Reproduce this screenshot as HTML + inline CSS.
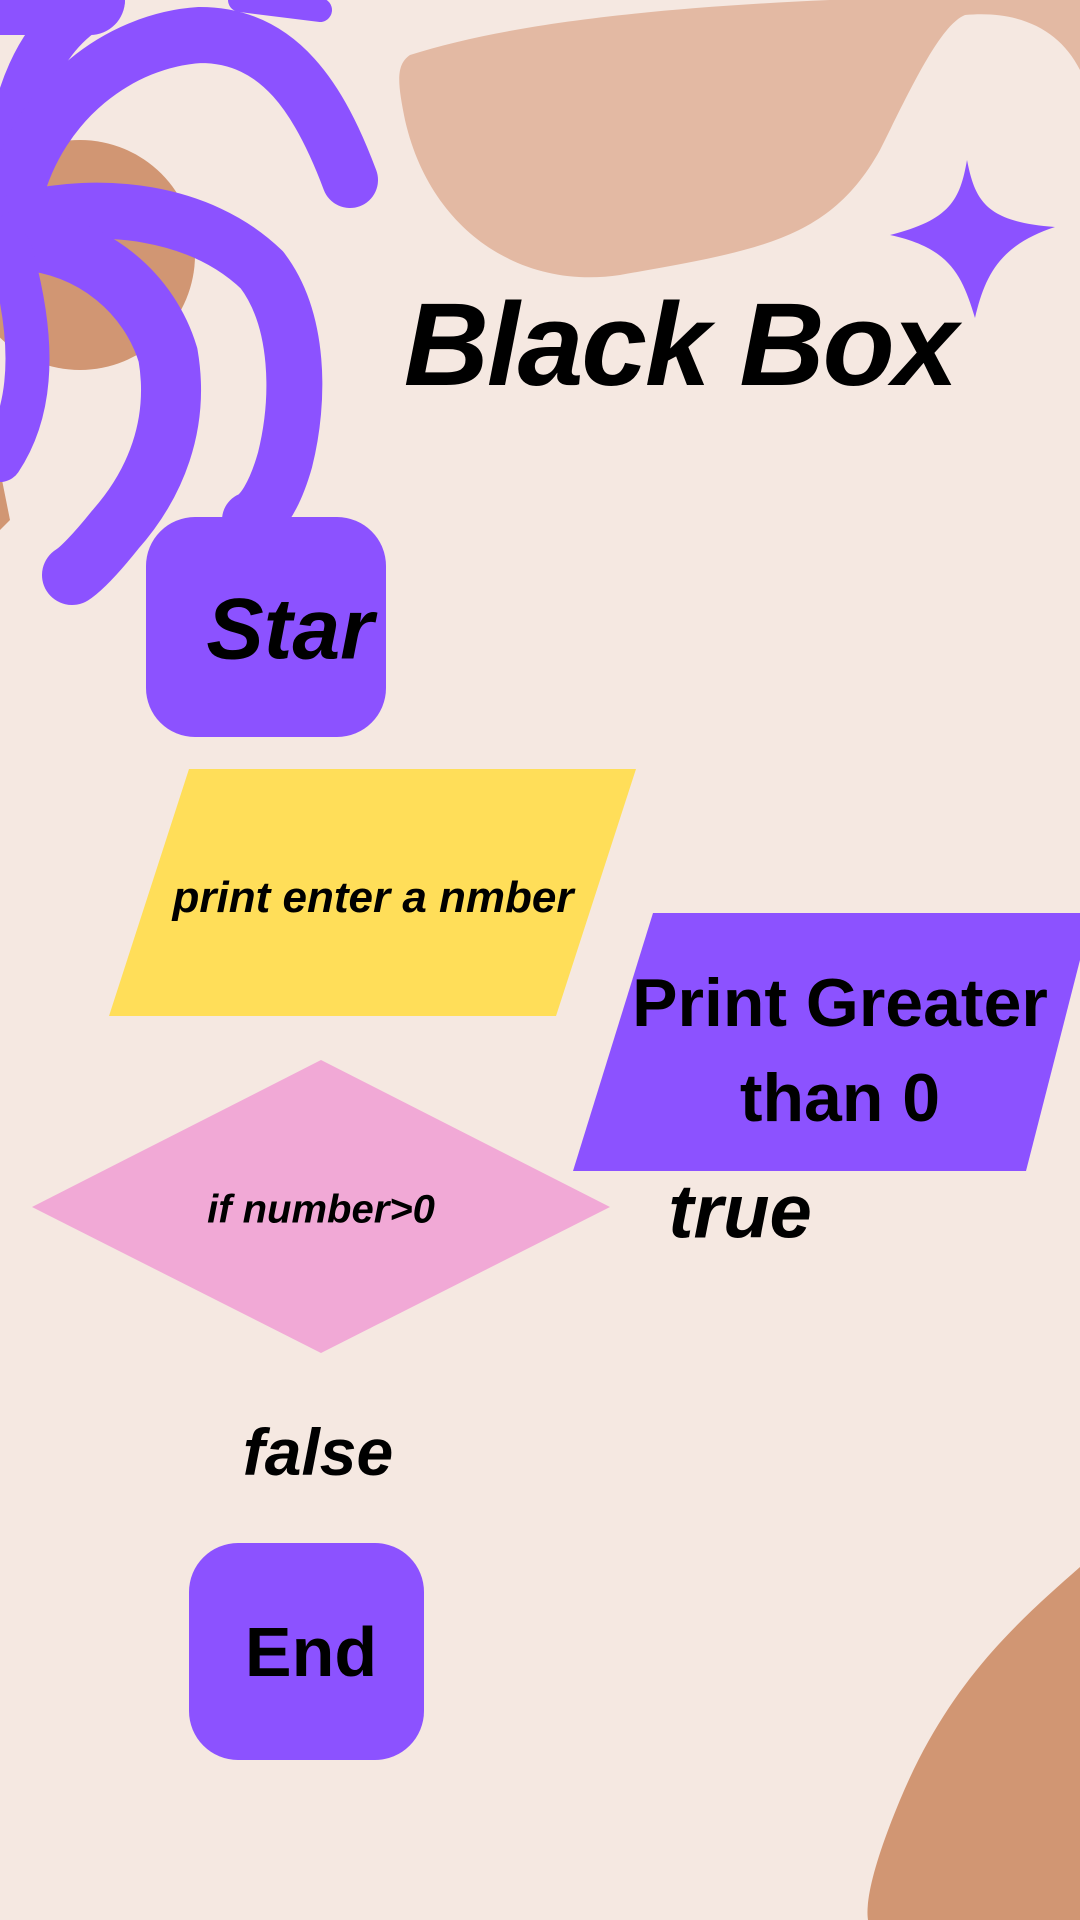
<!DOCTYPE html>
<html><head><meta charset="utf-8"><style>
html,body{margin:0;padding:0}
body{width:1080px;height:1920px;position:relative;overflow:hidden;background:#f5e8e1;font-family:"Liberation Sans",sans-serif}
.t{position:absolute;white-space:nowrap;color:#000;transform:translate(-50%,-50%)}
.sc{font-family:"Liberation Sans",sans-serif;font-style:italic;font-weight:bold}
.bd{font-family:"Liberation Sans",sans-serif;font-weight:bold}
</style></head><body>
<svg width="1080" height="1920" style="position:absolute;left:0;top:0">
<path d="M410 55 C520 20 700 0 1000 -5 L1080 0 L1080 70 C1060 30 1020 10 965 15 C940 25 910 90 880 150 C830 240 760 250 620 275 C520 290 430 230 405 120 C398 85 395 65 410 55Z" fill="#e3b9a3"/>
<circle cx="80" cy="255" r="115" fill="#d19673"/>
<path d="M0 470 L10 520 L0 530Z" fill="#d19673"/>
<g fill="none" stroke="#8c52ff" stroke-linecap="round">
<path d="M8 200 C10 100 40 30 100 0" stroke-width="50"/>
<path d="M0 0 L90 0" stroke-width="70"/>
<path d="M240 0 L320 10" stroke-width="24"/>
<path d="M15 195 C40 100 120 40 200 35 C280 35 320 100 350 180" stroke-width="56"/>
<path d="M20 220 C100 200 200 210 262 270 C300 320 300 400 285 460 C275 495 262 515 250 520" stroke-width="56"/>
<path d="M20 240 C95 245 150 295 168 355 C180 425 155 485 115 530 C95 555 80 570 72 575" stroke-width="60"/>
<path d="M10 250 C30 320 40 400 0 460" stroke-width="44"/>
</g>
<path d="M967 160 C975 200 985 222 1055 227 C1000 245 985 275 975 318 C962 275 950 248 890 235 C950 220 960 200 967 160Z" fill="#8c52ff"/>
<path d="M1080 1567 C1020 1620 950 1680 900 1800 C875 1860 865 1900 868 1920 L1080 1920Z" fill="#d19673"/>
<rect x="146" y="517" width="240" height="220" rx="49" fill="#8c52ff"/>
<polygon points="189,769 636,769 556,1016 109,1016" fill="#ffde59"/>
<polygon points="653,913 1080,913 1080,960 1026,1171 573,1171" fill="#8c52ff"/>
<polygon points="32,1207 321,1060 610,1207 321,1353" fill="#f1a9d6"/>
<rect x="189" y="1543" width="235" height="217" rx="49" fill="#8c52ff"/>
</svg>
<div class="t sc" style="left:680px;top:345px;font-size:118px;letter-spacing:-2px">Black Box</div>
<div class="t sc" style="left:290px;top:630px;font-size:86px">Star</div>
<div class="t sc" style="left:373px;top:898px;font-size:44px">print enter a nmber</div>
<div class="t bd" style="left:840px;top:1003px;font-size:68px">Print Greater</div>
<div class="t bd" style="left:840px;top:1098px;font-size:68px">than 0</div>
<div class="t sc" style="left:321px;top:1210px;font-size:40px">if number&gt;0</div>
<div class="t sc" style="left:740px;top:1212px;font-size:76px">true</div>
<div class="t sc" style="left:318px;top:1452px;font-size:66px">false</div>
<div class="t bd" style="left:311px;top:1652px;font-size:70px">End</div>
</body></html>
